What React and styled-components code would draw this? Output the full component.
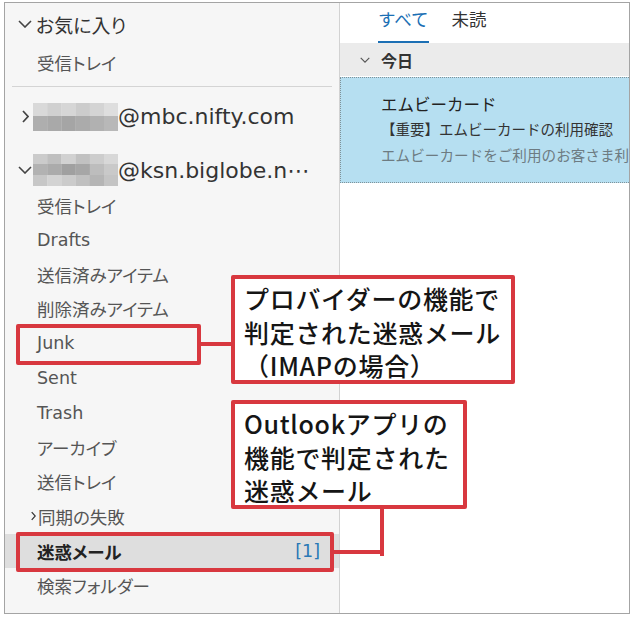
import styled, { createGlobalStyle } from 'styled-components';

const GlobalStyle = createGlobalStyle`
  body {
    margin: 0;
    background: #fff;
  }
`;

const RED = '#d8383f';

const Frame = styled.div`
  position: relative;
  display: flex;
  box-sizing: border-box;
  width: 626px;
  height: 612px;
  margin: 2px 0 0 4px;
  border: 1px solid #a4a4a4;
  overflow: hidden;
`;

const FolderPane = styled.div`
  display: flex;
  flex-direction: column;
  width: 334px;
  flex-shrink: 0;
  background: #f6f6f6;
  border-right: 1px solid #d2d2d2;
  font-family: "DejaVu Sans", "Noto Sans CJK JP", sans-serif;
  font-feature-settings: "palt";
  color: #4f4f4f;
`;

const FavHeader = styled.div`
  display: flex;
  align-items: center;
  height: 42px;
  padding-left: 12px;
  font-size: 19px;
  color: #333;
`;

const Separator = styled.div`
  height: 1px;
  margin: 6px 7px 0 7px;
  background: #d4d4d4;
`;

const AccountRow = styled.div`
  display: flex;
  align-items: center;
  height: 34.6px;
  margin-top: ${({ $gap }) => $gap}px;
  padding-left: 12px;
  font-size: 22px;
  color: #333;
  white-space: nowrap;
`;

const ChevronSlot = styled.span`
  display: flex;
  justify-content: center;
  align-items: center;
  width: 16px;
  margin-right: ${({ $space }) => $space || 0}px;
`;

const Row = styled.div`
  position: relative;
  display: flex;
  align-items: center;
  justify-content: space-between;
  height: 34.6px;
  padding: 0 19px 0 ${({ $indent }) => $indent ?? 32}px;
  font-size: 17.5px;
  font-weight: ${({ $bold }) => ($bold ? 700 : 400)};
  color: ${({ $bold }) => ($bold ? '#222' : '#555')};
  background: ${({ $active }) => ($active ? '#dedede' : 'transparent')};
  white-space: nowrap;

  &::after {
    content: '';
    display: ${({ $mark }) => ($mark ? 'block' : 'none')};
    position: absolute;
    left: 11px;
    top: ${({ $mark }) => ($mark ? $mark.top : 0)}px;
    width: ${({ $mark }) => ($mark ? $mark.width : 0)}px;
    height: ${({ $mark }) => ($mark ? $mark.height : 0)}px;
    box-sizing: border-box;
    border: 4px solid ${RED};
    border-radius: 2px;
  }
`;

const RowLabel = styled.span`
  display: flex;
  align-items: center;
`;

const Count = styled.span`
  font-weight: 400;
  color: #2a78b5;
`;

const MessagePane = styled.div`
  display: flex;
  flex-direction: column;
  flex: 1;
  min-width: 0;
  background: #fff;
  font-family: "DejaVu Sans", "Noto Sans CJK JP", sans-serif;
`;

const Tabs = styled.div`
  display: flex;
  gap: 23px;
  height: 40px;
  padding-left: 38px;
`;

const Tab = styled.div`
  box-sizing: border-box;
  height: 40px;
  line-height: 34px;
  font-size: 17.5px;
  color: ${({ $active }) => ($active ? '#1b6fb4' : '#333')};
  border-bottom: 2px solid ${({ $active }) => ($active ? '#1b6fb4' : 'transparent')};
`;

const GroupHeader = styled.div`
  display: flex;
  align-items: center;
  height: 33px;
  padding-left: 17px;
  background: #ebebeb;
  font-size: 16px;
  font-weight: 700;
  color: #333;
`;

const MailItem = styled.div`
  box-sizing: border-box;
  height: 106px;
  margin-top: 1px;
  padding: 15px 0 0 40px;
  background: #b6dff1;
  border: 1px dotted #7f9299;
  border-right: none;
  white-space: nowrap;
  overflow: hidden;
`;

const MailLine = styled.div`
  height: 25px;
  line-height: 25px;
  font-size: ${({ $size }) => $size}px;
  color: ${({ $color }) => $color};
`;

const Callout = styled.div`
  position: absolute;
  left: 226px;
  top: ${({ $top }) => $top}px;
  width: ${({ $width }) => $width}px;
  height: 109px;
  box-sizing: border-box;
  padding: 3px 0 0 9px;
  background: #fff;
  border: 4px solid ${RED};
  border-radius: 2px;
  font-family: "Noto Sans CJK JP", sans-serif;
  font-size: 25px;
  font-weight: 500;
  letter-spacing: 0.7px;
  line-height: 33.5px;
  color: #151515;
  white-space: nowrap;
`;

const Leader = styled.div`
  position: absolute;
  left: ${({ $x }) => $x}px;
  top: ${({ $y }) => $y}px;
  width: ${({ $w }) => $w}px;
  height: ${({ $h }) => $h}px;
  background: ${RED};
`;

function ChevronDown({ w = 14, h = 8, color = '#444' }) {
  return (
    <svg width={w} height={h} viewBox="0 0 14 8">
      <polyline points="1,1 7,7 13,1" fill="none" stroke={color} strokeWidth="1.6" />
    </svg>
  );
}

function ChevronRight({ w = 7, h = 13, color = '#444' }) {
  return (
    <svg width={w} height={h} viewBox="0 0 7 13">
      <polyline points="1,1 6,6.5 1,12" fill="none" stroke={color} strokeWidth="1.7" />
    </svg>
  );
}

function Mosaic({ rows }) {
  const cw = 14.2;
  const total = rows.reduce((a, r) => a + r.h, 0);
  let y = 0;
  return (
    <svg width="85" height={total} style={{ flexShrink: 0 }}>
      {rows.map((r, ri) => {
        const top = y;
        y += r.h;
        return r.c.map((c, ci) => (
          <rect key={ri + '-' + ci} x={ci * cw} y={top} width={cw + 0.2} height={r.h + 0.2} fill={c} />
        ));
      })}
    </svg>
  );
}

const niftyBlur = [
  { h: 13, c: ['#d9d9d9', '#d0d0d0', '#d6d6d6', '#cccccc', '#d4d4d4', '#dedede'] },
  { h: 15, c: ['#aeaeae', '#a9a9a9', '#a5a5a5', '#ababab', '#b1b1b1', '#b8b8b8'] },
];

const biglobeBlur = [
  { h: 10, c: ['#cbcbcb', '#bfbfbf', '#d1d1d1', '#c1c1c1', '#cdcdcd', '#d8d8d8'] },
  { h: 11, c: ['#b2b2b2', '#ababab', '#a0a0a0', '#a6a6a6', '#bdbdbd', '#c9c9c9'] },
  { h: 11, c: ['#c7c7c7', '#d3d3d3', '#cbcbcb', '#c0c0c0', '#b5b5b5', '#c4c4c4'] },
];

const folders = [
  { name: '受信トレイ' },
  { name: 'Drafts' },
  { name: '送信済みアイテム' },
  { name: '削除済みアイテム' },
  { name: 'Junk', mark: { top: -2.2, width: 185, height: 41 } },
  { name: 'Sent' },
  { name: 'Trash' },
  { name: 'アーカイブ' },
  { name: '送信トレイ' },
  { name: '同期の失敗', collapsed: true },
  { name: '迷惑メール', active: true, count: '[1]', mark: { top: -1.5, width: 318, height: 40 } },
  { name: '検索フォルダー' },
];

export default function App() {
  return (
    <>
      <GlobalStyle />
      <Frame>
        <FolderPane>
          <FavHeader>
            <ChevronSlot $space={3}>
              <ChevronDown />
            </ChevronSlot>
            お気に入り
          </FavHeader>
          <Row>受信トレイ</Row>
          <Separator />
          <AccountRow $gap={13}>
            <ChevronSlot>
              <ChevronRight />
            </ChevronSlot>
            <Mosaic rows={niftyBlur} />
            @mbc.nifty.com
          </AccountRow>
          <AccountRow $gap={19}>
            <ChevronSlot>
              <ChevronDown />
            </ChevronSlot>
            <Mosaic rows={biglobeBlur} />
            @ksn.biglobe.n⋯
          </AccountRow>
          {folders.map(f => (
            <Row
              key={f.name}
              $indent={f.collapsed ? 26 : 32}
              $active={f.active}
              $bold={f.active}
              $mark={f.mark}
            >
              <RowLabel>
                {f.collapsed && (
                  <span style={{ marginRight: 2, display: 'flex' }}>
                    <ChevronRight w={5} h={10} color="#333" />
                  </span>
                )}
                {f.name}
              </RowLabel>
              {f.count && <Count>{f.count}</Count>}
            </Row>
          ))}
        </FolderPane>

        <MessagePane>
          <Tabs>
            <Tab $active>すべて</Tab>
            <Tab>未読</Tab>
          </Tabs>
          <GroupHeader>
            <ChevronSlot $space={8}>
              <ChevronDown w={10} h={6} color="#555" />
            </ChevronSlot>
            今日
          </GroupHeader>
          <MailItem>
            <MailLine $size={16.5} $color="#222">エムビーカード</MailLine>
            <MailLine $size={14.5} $color="#333">【重要】エムビーカードの利用確認</MailLine>
            <MailLine $size={14.6} $color="#6d7b82">エムビーカードをご利用のお客さま利用確認のお願い</MailLine>
          </MailItem>
        </MessagePane>

        <Leader $x={196} $y={339} $w={31} $h={4} />
        <Callout $top={272} $width={284}>
          プロバイダーの機能で
          <br />
          判定された迷惑メール
          <br />
          （IMAPの場合）
        </Callout>

        <Callout $top={397} $width={236}>
          Outlookアプリの
          <br />
          機能で判定された
          <br />
          迷惑メール
        </Callout>
        <Leader $x={375} $y={504} $w={4} $h={49} />
        <Leader $x={329} $y={547} $w={50} $h={4} />
      </Frame>
    </>
  );
}
